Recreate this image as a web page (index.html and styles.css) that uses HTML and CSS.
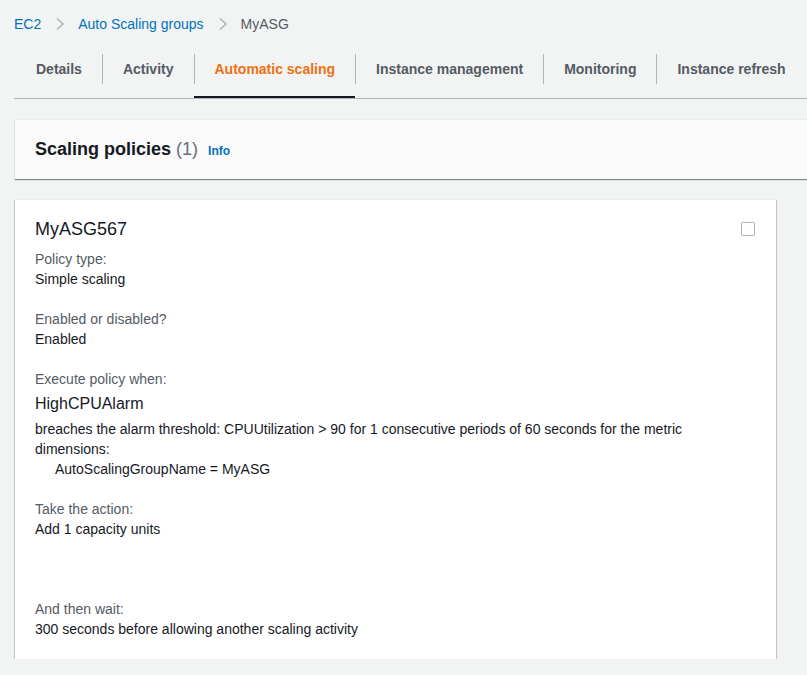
FILE: index.html
```html
<!DOCTYPE html>
<html lang="en">
<head>
<meta charset="utf-8">
<title>MyASG - Automatic scaling</title>
<link rel="stylesheet" href="styles.css">
</head>
<body>
<nav class="crumbs">
  <a class="crumb-link" href="#">EC2</a>
  <svg class="chev" width="10" height="14" viewBox="0 0 10 14"><polyline points="2,1.5 8,7 2,12.5" fill="none" stroke="#aab7b8" stroke-width="1.6"/></svg>
  <a class="crumb-link" href="#">Auto Scaling groups</a>
  <svg class="chev" width="10" height="14" viewBox="0 0 10 14"><polyline points="2,1.5 8,7 2,12.5" fill="none" stroke="#aab7b8" stroke-width="1.6"/></svg>
  <span class="crumb-current">MyASG</span>
</nav>

<div class="tabs">
  <div class="tab first"><span class="tab-label">Details</span></div>
  <div class="tab"><span class="tab-label sep">Activity</span></div>
  <div class="tab active"><span class="tab-label sep">Automatic scaling</span></div>
  <div class="tab"><span class="tab-label sep">Instance management</span></div>
  <div class="tab"><span class="tab-label sep">Monitoring</span></div>
  <div class="tab"><span class="tab-label sep">Instance refresh</span></div>
</div>

<section class="panel-header">
  <h2 class="panel-title">Scaling policies <span class="count">(1)</span></h2>
  <a class="info" href="#">Info</a>
</section>

<section class="card">
  <div class="card-top">
    <h3 class="card-title">MyASG567</h3>
    <span class="checkbox"></span>
  </div>

  <div class="field">
    <div class="label">Policy type:</div>
    <div class="value">Simple scaling</div>
  </div>

  <div class="field">
    <div class="label">Enabled or disabled?</div>
    <div class="value">Enabled</div>
  </div>

  <div class="field">
    <div class="label">Execute policy when:</div>
    <div class="alarm">HighCPUAlarm</div>
    <div class="value breach">breaches the alarm threshold: CPUUtilization &gt; 90 for 1 consecutive periods of 60 seconds for the metric dimensions:</div>
    <div class="value dim">AutoScalingGroupName = MyASG</div>
  </div>

  <div class="field">
    <div class="label">Take the action:</div>
    <div class="value">Add 1 capacity units</div>
  </div>

  <div class="field wait">
    <div class="label">And then wait:</div>
    <div class="value">300 seconds before allowing another scaling activity</div>
  </div>
</section>
</body>
</html>
```

FILE: styles.css
```css
html, body {
  margin: 0;
  padding: 0;
  background: #f2f3f3;
  font-family: "Liberation Sans", Arial, sans-serif;
  font-size: 14px;
  line-height: 20px;
  color: #16191f;
  overflow: hidden;
}

.crumbs {
  display: flex;
  align-items: center;
  padding: 14px 0 0 14px;
  height: 20px;
}

.crumb-link {
  color: #0073bb;
  text-decoration: none;
}

.chev {
  margin: 0 13px 0 14px;
}

.crumb-current {
  color: #545b64;
}

.tabs {
  display: flex;
  margin: 20px 0 0 14px;
  border-bottom: 1px solid #aab7b8;
}

.tab {
  padding-bottom: 12px;
  border-bottom: 2px solid transparent;
}

.tab.first {
  padding-left: 2px;
}

.tab.active {
  border-bottom-color: #16191f;
}

.tab-label {
  display: block;
  height: 30px;
  line-height: 30px;
  padding: 0 20px;
  font-weight: bold;
  color: #545b64;
}

.tab-label.sep {
  border-left: 1px solid #aab7b8;
}

.tab.active .tab-label {
  color: #ec7211;
}

.panel-header {
  display: flex;
  align-items: baseline;
  margin: 20px 0 0 15px;
  padding: 18px 20px 18px;
  background: #fafafa;
  border-top: 1px solid #eaeded;
  box-shadow: 0 1px 1px 0 rgba(0, 28, 36, 0.5);
}

.panel-title {
  margin: 0;
  font-size: 18px;
  line-height: 22px;
  font-weight: bold;
  color: #16191f;
}

.count {
  font-weight: normal;
  color: #687078;
}

.info {
  margin-left: 10px;
  font-size: 12px;
  font-weight: bold;
  color: #0073bb;
  text-decoration: none;
}

.card {
  margin: 20px 31px 0 15px;
  padding: 19px 20px 20px;
  background: #ffffff;
  border-top: 1px solid #eaeded;
  box-shadow: 0 1px 1px 0 rgba(0, 28, 36, 0.3), 1px 1px 1px 0 rgba(0, 28, 36, 0.15), -1px 1px 1px 0 rgba(0, 28, 36, 0.15);
}

.card-top {
  display: flex;
  justify-content: space-between;
  align-items: center;
}

.card-title {
  margin: 0;
  font-size: 18px;
  line-height: 20px;
  font-weight: normal;
  color: #16191f;
}

.checkbox {
  width: 12px;
  height: 12px;
  border: 1px solid #aab7b8;
  border-radius: 2px;
  background: #ffffff;
  margin-right: 1px;
}

.field {
  margin-top: 20px;
}

.card-top + .field {
  margin-top: 10px;
}

.field.wait {
  margin-top: 60px;
}

.label {
  color: #545b64;
}

.value {
  color: #16191f;
}

.alarm {
  margin-top: 5px;
  font-size: 16px;
  color: #16191f;
}

.breach {
  margin-top: 5px;
}

.dim {
  padding-left: 20px;
}
```
